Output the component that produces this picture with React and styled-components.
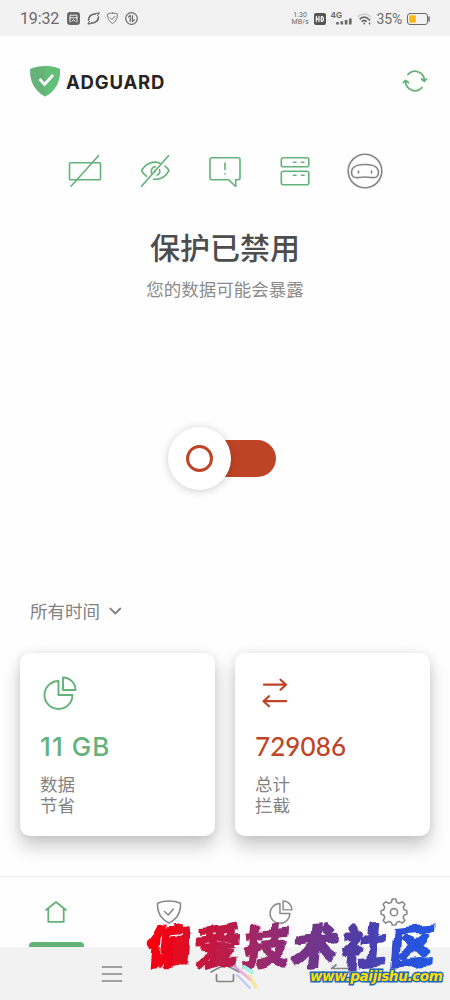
import React from "react";
import styled, { createGlobalStyle } from "styled-components";

const green = "#63b277";
const red = "#bf4426";
const gray = "#8a8a8a";

const GlobalStyle = createGlobalStyle`
  *,
  *::before,
  *::after {
    box-sizing: border-box;
  }

  body {
    margin: 0;
    background: #fefefe;
    font-family: Inter, "Noto Sans CJK SC", sans-serif;
  }
`;

const Screen = styled.div`
  position: relative;
  display: flex;
  flex-direction: column;
  width: 450px;
  height: 1000px;
  overflow: hidden;
  background: #fefefe;
`;

const Icon = styled.svg`
  display: block;
  flex: none;
  overflow: visible;
  fill: none;
  stroke: ${props => props.$color || "currentColor"};
  stroke-width: ${props => props.$weight || 1.8};
  stroke-linecap: round;
  stroke-linejoin: round;
`;

const StatusBar = styled.div`
  display: flex;
  align-items: center;
  justify-content: space-between;
  flex: none;
  height: 36px;
  padding: 1px 20px 0;
  background: #f2f2f2;
  color: #6a6a6a;
`;

const StatusGroup = styled.div`
  display: flex;
  align-items: center;
  gap: ${props => props.$gap}px;
`;

const Clock = styled.span`
  width: 41px;
  font-family: Roboto, sans-serif;
  font-size: 16px;
  letter-spacing: -0.15px;
`;

const Speed = styled.span`
  width: 17px;
  font-family: Roboto, sans-serif;
  font-size: 7px;
  line-height: 7px;
  text-align: center;
  white-space: nowrap;
`;

const Network = styled.span`
  display: flex;
  width: 21px;
  height: 15px;
  font-size: 8px;
  font-weight: 700;
  line-height: 8px;
`;

const Signal = styled(Icon)`
  margin-left: -6px;
`;

const Battery = styled.span`
  font-family: Roboto, sans-serif;
  font-size: 14px;
  letter-spacing: -0.2px;
`;

const Header = styled.header`
  display: flex;
  align-items: center;
  justify-content: space-between;
  flex: none;
  height: 90px;
  padding: 0 23px 0 29px;
`;

const Brand = styled.div`
  display: flex;
  align-items: center;
  gap: 5px;
`;

const BrandName = styled.span`
  padding-top: 1px;
  color: #252525;
  font-size: 18.5px;
  font-weight: 700;
  line-height: 20px;
  letter-spacing: 0.8px;
`;

const Features = styled.div`
  display: flex;
  justify-content: center;
  gap: 34px;
  flex: none;
  height: 36px;
  margin-top: 27px;
`;

const Title = styled.h1`
  flex: none;
  margin: 37px 0 0;
  color: #4d4d4d;
  font-size: 30px;
  font-weight: 500;
  line-height: 44px;
  text-align: center;
`;

const Subtitle = styled.p`
  flex: none;
  margin: 7px 0 0;
  color: #8c8c8c;
  font-size: 17.5px;
  line-height: 26px;
  text-align: center;
`;

const Toggle = styled.button`
  display: flex;
  align-items: center;
  flex: none;
  width: 90px;
  height: 37px;
  margin: 137px 0 0 186px;
  padding: 0;
  border: 0;
  border-radius: 19px;
  background: ${red};
`;

const Knob = styled.span`
  display: flex;
  align-items: center;
  justify-content: center;
  flex: none;
  width: 63px;
  height: 63px;
  margin-left: -18px;
  border-radius: 50%;
  background: #fff;
  box-shadow: 0 1px 8px rgba(0, 0, 0, 0.2);

  &::after {
    content: "";
    width: 27px;
    height: 27px;
    border: 3px solid ${red};
    border-radius: 50%;
  }
`;

const Period = styled.div`
  display: flex;
  align-items: center;
  gap: 9px;
  flex: none;
  height: 26px;
  margin: 120px 0 0 30px;
  color: #828282;
  font-size: 17.5px;
`;

const Cards = styled.div`
  display: grid;
  grid-template-columns: 1fr 1fr;
  gap: 20px;
  flex: none;
  margin-top: 30px;
  padding: 0 20px;
`;

const Card = styled.section`
  height: 183px;
  padding: 22px 20px 0;
  border-radius: 10px;
  background: #fff;
  box-shadow: 0 10px 18px rgba(0, 0, 0, 0.21), 0 0 8px rgba(0, 0, 0, 0.08);
`;

const CardIcon = styled.div`
  height: 34px;
  padding: 1px 0 0 3px;
`;

const Value = styled.div`
  height: 36px;
  margin-top: 18px;
  padding-top: ${props => props.$top}px;
  color: ${props => props.$color};
  font-family: ${props => props.$font}, sans-serif;
  font-size: 26px;
  font-weight: 500;
  line-height: 34px;
  letter-spacing: ${props => props.$spacing}px;
  white-space: nowrap;
`;

const Label = styled.div`
  margin-top: 11px;
  color: #828282;
  font-size: 17.5px;
  line-height: 21px;
`;

const TabBar = styled.nav`
  display: grid;
  grid-template-columns: repeat(4, 1fr);
  flex: none;
  height: 71px;
  margin-top: 40px;
  border-top: 1px solid #ececec;
`;

const Tab = styled.div`
  display: flex;
  flex-direction: column;
  align-items: center;
  justify-content: space-between;
  padding-top: ${props => props.$top || 21}px;

  &::after {
    content: "";
    width: 55px;
    height: 5px;
    border-radius: 4px 4px 0 0;
    background: ${props => (props.$active ? green : "transparent")};
  }
`;

const SystemBar = styled.div`
  display: grid;
  grid-template-columns: repeat(3, 1fr);
  align-items: center;
  justify-items: center;
  flex: none;
  height: 53px;
  padding: 0 54px 0 55px;
  background: #f2f2f2;
`;

// Community logo floats over both bottom bars
const Watermark = styled.div`
  position: absolute;
  top: 920px;
  left: 147px;
  width: 300px;
  height: 68px;
`;

const CommunityName = styled.div`
  display: flex;
  gap: 3.7px;
  width: 296px;
  filter: url(#brush);
  font-family: "Noto Sans CJK SC", sans-serif;
  font-size: 45px;
  font-weight: 900;
  line-height: 48px;
`;

const Glyph = styled.span`
  width: 45px;
  background: linear-gradient(90deg, ${props => props.$from}, ${props => props.$to});
  background-clip: text;
  color: transparent;
  transform: skew(-5deg, -5deg);
`;

const Strokes = styled.svg`
  position: absolute;
  top: 43px;
  left: 84px;
`;

const Site = styled.div`
  position: absolute;
  top: 48px;
  left: 163px;
  color: #ffdf00;
  font-family: "DejaVu Sans", sans-serif;
  font-size: 13.5px;
  font-style: italic;
  font-weight: 700;
  line-height: 16px;
  letter-spacing: -0.35px;
  white-space: nowrap;
  -webkit-text-stroke: 3px #2468b8;
  paint-order: stroke fill;
`;

const glyphs = [
  ["偏", "#fa000a", "#d80a28"],
  ["爱", "#cc1236", "#b02052"],
  ["技", "#a5275f", "#8a2b7a"],
  ["术", "#7d3082", "#653894"],
  ["社", "#553a9e", "#4444b8"],
  ["区", "#324bcf", "#2057e4"]
];

function PieIcon({ size, color, weight }) {
  return (
    <Icon width={size} height={size} viewBox="0 0 34 34" $color={color} $weight={weight}>
      <path d="M15.500 5A14 14 0 1 0 29.500 19h-14z" />
      <path d="M20 1.500V14h12.500A12.500 12.500 0 0 0 20 1.500z" />
    </Icon>
  );
}

function StatusIcons() {
  return (
    <StatusGroup $gap={7}>
      <Icon width="13" height="13" viewBox="0 0 13 13" $weight={1}>
        <rect x=".5" y=".5" width="12" height="12" rx="2" fill="#666" />
        <path d="M3 9.800V3.200h7v6.600M3 5.800h7M4.800 9.300l1.700-1.500 1.700 1.500" stroke="#f2f2f2" />
      </Icon>
      <Icon width="13" height="13" viewBox="0 0 13 13" $weight={1.7}>
        <path d="M1.500 8C1.500 5 4 2 8 2M11.500 5C11.500 8 9 11 5 11" />
        <path d="M1 11.800L2.500 9.500M12.300 1L10.500 3.500M1 11.800c1.500.3 3-.2 4-.8M12.300 1C10.500.8 9 1.200 8 2" strokeWidth="1.100" />
      </Icon>
      <Icon width="11" height="13" viewBox="0 0 11 13" $weight={0.9}>
        <path d="M5.500 1C7 1 9 1.400 10.400 2c.1 4-1.200 7.500-4.900 9.500C1.800 9.500.5 6 .6 2 2 1.400 4 1 5.500 1z" />
        <path d="M3.200 5.800L5 7.600l3-3.300" />
      </Icon>
      <Icon width="13" height="13" viewBox="0 0 13 13" $weight={1.2}>
        <circle cx="6.500" cy="6.500" r="5.800" />
        <path d="M3.600 4.800L5.200 3.500V9.500M7.400 3.500v6M7.400 9.500L9.300 7.800" />
      </Icon>
    </StatusGroup>
  );
}

export default function App() {
  return (
    <Screen>
      <GlobalStyle />
      <StatusBar>
        <StatusGroup $gap={6}>
          <Clock>19:32</Clock>
          <StatusIcons />
        </StatusGroup>
        <StatusGroup $gap={5}>
          <Speed>
            1.30
            <br />
            MB/s
          </Speed>
          <Icon width="12" height="12" viewBox="0 0 12 12" $weight={1.3}>
            <rect width="12" height="12" rx="2" fill="#555" stroke="none" />
            <path d="M2.400 3.500v5M5 3.500v5M2.400 6H5M7.300 3.700v4.600h.6c2 0 2-4.600 0-4.600z" stroke="#f2f2f2" />
          </Icon>
          <Network>
            4G
            <Signal width="16" height="15" viewBox="0 0 16 15" $weight={2.7}>
              <path d="M1.500 11v2.600M5.800 10.300v3.300M10.100 9v4.600M14.300 7.500v6.100" strokeLinecap="butt" />
            </Signal>
          </Network>
          <Icon width="15" height="13" viewBox="0 0 15 13" $weight={1.8}>
            <path d="M1 4.500C4.500 1.300 10 1.300 13.500 4.500" stroke="#d2d2d2" />
            <path d="M3.200 6.800c2.500-2 5.700-2 8 0M5.300 9.200c1.200-1 2.600-1 3.800 0" />
            <path d="M7.200 11.500v.1M12.500 8v.1M12.500 11.500v.1" />
          </Icon>
          <Battery>35%</Battery>
          <Icon width="23" height="12" viewBox="0 0 23 12" $weight={1}>
            <rect x=".5" y=".5" width="20" height="11" rx="2.500" />
            <rect x="2.300" y="2.300" width="6.500" height="7.400" rx=".7" fill="#fcb616" stroke="none" />
            <path d="M22 4v4" strokeWidth="1.500" />
          </Icon>
        </StatusGroup>
      </StatusBar>

      <Header>
        <Brand>
          <Icon width="32" height="32" viewBox="0 0 32 32">
            <path d="M16 1c5 0 10.500 1 15 3 .2 11-3 21-15 27.500C4 25 .8 15 1 4 5.500 2 11 1 16 1z" fill="#67b279" stroke="none" />
            <path d="M16 1c5 0 10.500 1 15 3 .2 11-3 21-15 27.500z" fill="#62bf77" stroke="none" />
            <path d="M10.500 14l5 5.500 8.500-9.500" stroke="#fff" strokeWidth="2.800" strokeLinecap="butt" strokeLinejoin="miter" />
          </Icon>
          <BrandName>ADGUARD</BrandName>
        </Brand>
        <Icon width="24" height="22" viewBox="0 0 24 22" $color={green} $weight={1.8}>
          <path d="M5 4.500a9.300 9.300 0 0 1 16.300 6.500M2.700 11A9.300 9.300 0 0 0 19 17.500" />
          <path d="M18.500 9l2.800 2.300L23.500 9M.5 12.500L2.700 10.500 5.500 12.500" />
        </Icon>
      </Header>

      <Features>
        <Icon width="36" height="36" viewBox="0 -.7 36 36" $color={green} $weight={1.6}>
          <rect x="2.500" y="9" width="31" height="17" rx="1" />
          <path d="M4 32.500L31.500 2" />
        </Icon>
        <Icon width="36" height="36" viewBox="0 -.7 36 36" $color={green} $weight={1.6}>
          <path d="M23 9.500C16 6.500 8.500 10 4.500 17c1.200 2.400 3.200 4.300 5.200 5.600M28 12.500c1.700 1.300 3 2.800 4 4.500-3.800 7-9.500 9.300-15.500 8.500" />
          <path d="M18.500 13c-4 0-5 4.500-3.500 7M22.500 16c1 2.500-.5 4.800-2.500 5.300M18.200 16.500v1.500" />
          <path d="M4.500 32.500L31.500 2" />
        </Icon>
        <Icon width="36" height="36" viewBox="0 -.7 36 36" $color={green} $weight={1.6}>
          <path d="M5 4h26a2 2 0 0 1 2 2v18a2 2 0 0 1-2 2h-2.300v6.800L21.500 26H5a2 2 0 0 1-2-2V6a2 2 0 0 1 2-2z" />
          <path d="M18 9.300v6.500M18 20v.3" />
        </Icon>
        <Icon width="36" height="36" viewBox="0 -.7 36 36" $color={green} $weight={1.6}>
          <rect x="4.300" y="4" width="27.500" height="9" rx="2" />
          <rect x="4.300" y="17.500" width="27.500" height="13.500" rx="2" />
          <path d="M16.500 8.500H19M24.500 8.500H27M16.500 21.500H19M24.500 21.500H27" />
        </Icon>
        <Icon width="36" height="36" viewBox="0 0 36 36" $color="#858585" $weight={1.6}>
          <circle cx="18" cy="18" r="16.800" />
          <path d="M18 11.500c5 0 9.500.5 12 3.500 2 2.500 2 6.500 0 8.500-2.500 2.500-5 .5-12 .5s-9.500 2-12-.5c-2-2-2-6 0-8.500 2.500-3 7-3.500 12-3.500z" />
          <path d="M11.500 18v2M24.500 18v2" />
        </Icon>
      </Features>

      <Title>保护已禁用</Title>
      <Subtitle>您的数据可能会暴露</Subtitle>
      <Toggle aria-label="保护已禁用">
        <Knob />
      </Toggle>

      <Period>
        所有时间
        <Icon width="13" height="8" viewBox="0 -1 13 8" $weight={1.8}>
          <path d="M1.300 1.500l5 5 5-5" />
        </Icon>
      </Period>

      <Cards>
        <Card>
          <CardIcon>
            <PieIcon size={34} color={green} weight={1.9} />
          </CardIcon>
          <Value $color={green} $font="Inter" $spacing={1.1} $top={3}>11 GB</Value>
          <Label>
            数据
            <br />
            节省
          </Label>
        </Card>
        <Card>
          <Icon width="40" height="34" viewBox="0 .3 40 34" $color={red} $weight={2.2}>
            <path d="M9 10h22M25.500 5l5.500 5-5.500 5M31 26.500H8.500M14 21.500l-5.500 5 5.500 5" />
          </Icon>
          <Value $color={red} $font="Lato" $spacing={0.1} $top={2}>729086</Value>
          <Label>
            总计
            <br />
            拦截
          </Label>
        </Card>
      </Cards>

      <TabBar>
        <Tab $active>
          <Icon width="28" height="28" viewBox="0 0 28 28" $color={green} $weight={1.8}>
            <path d="M4 12L14 4l10 8M6.300 11v12.800h15.400V11" />
          </Icon>
        </Tab>
        <Tab>
          <Icon width="28" height="28" viewBox="0 0 28 28" $color={gray} $weight={1.6}>
            <path d="M14 3c4 0 8 .7 11.500 2.300.3 8-2.700 15.500-11.500 19.700C5.200 20.800 2.200 13.300 2.500 5.300 6 3.700 10 3 14 3z" />
            <path d="M9.500 13.500l3.800 3.500 5-6" />
          </Icon>
        </Tab>
        <Tab $top={23}>
          <PieIcon size={24} color={gray} weight={2.1} />
        </Tab>
        <Tab>
          <Icon width="28" height="28" viewBox="0 .6 28 28" $color={gray} $weight={1.6}>
            <path d="M12.200 1.600h3.600l.8 3.300 2.700 1.100 3-1.700 2.600 2.600-1.700 3 1.100 2.600 2.500.7v3.600l-2.500.7-1.100 2.700 1.700 2.900-2.600 2.600-3-1.700-2.700 1.100-.8 2.500h-3.600l-.8-2.500-2.700-1.100-3 1.700-2.600-2.600 1.700-2.900-1.100-2.700-2.500-.7v-3.600l2.500-.7 1.100-2.600-1.700-3 2.600-2.600 3 1.700 2.700-1.100z" />
            <circle cx="14" cy="14.800" r="3.600" />
          </Icon>
        </Tab>
      </TabBar>

      <SystemBar>
        <Icon width="22" height="18" viewBox="0 0 22 18" $color="#858585" $weight={1.7}>
          <path d="M1.500 2h19M1.500 9h19M1.500 16h19" />
        </Icon>
        <Icon width="30" height="22" viewBox="0 .5 30 22" $color="#858585" $weight={1.7}>
          <path d="M1 9.500L15 2l14 7.500M6.500 12v5.500q0 1.500 1.500 1.500h14q1.500 0 1.500-1.500V12" />
        </Icon>
        <Icon width="22" height="20" viewBox="-2 0 22 20" $color="#858585" $weight={1.7}>
          <path d="M6 1L1.500 4.500H17q3 0 3 3V14q0 2-2 2H8" />
        </Icon>
      </SystemBar>

      <Watermark>
        <CommunityName>
          {glyphs.map(([char, from, to]) => (
            <Glyph key={char} $from={from} $to={to}>
              {char}
            </Glyph>
          ))}
        </CommunityName>
        <Strokes width="34" height="28" viewBox="0 0 34 28" fill="none" strokeLinecap="round">
          <filter id="brush" x="-5%" y="-10%" width="110%" height="120%">
            <feTurbulence type="fractalNoise" baseFrequency="0.07" numOctaves="1" seed="4" result="noise" />
            <feMorphology in="SourceGraphic" operator="dilate" radius="0.7" result="thick" />
            <feDisplacementMap in="thick" in2="noise" scale="9" xChannelSelector="R" yChannelSelector="G" />
          </filter>
          <path d="M3 3l17 14" stroke="#d79adf" strokeWidth="2.500" />
          <path d="M13 4l8 5" stroke="#a8f0e4" strokeWidth="4" />
          <path d="M18 13l7 11" stroke="#f6e6a4" strokeWidth="4" />
          <path d="M6 12l13 13" stroke="#bfc8f4" strokeWidth="2" />
          <path d="M9 7l10 10" stroke="#f6b1dc" strokeWidth="2" />
        </Strokes>
        <Site>www.paijishu.com</Site>
      </Watermark>
    </Screen>
  );
}
